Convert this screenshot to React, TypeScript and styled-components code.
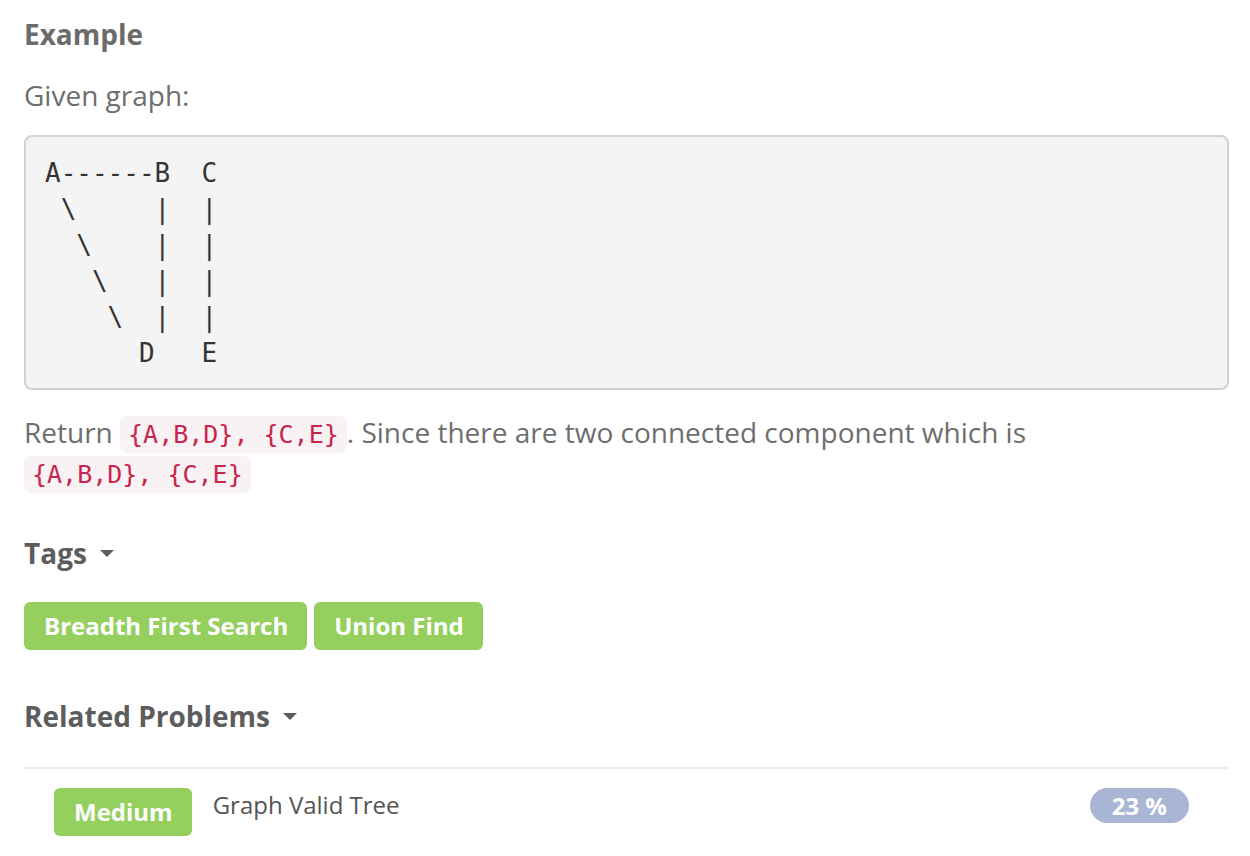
import React from 'react';
import styled, { createGlobalStyle } from 'styled-components';

const GlobalStyle = createGlobalStyle`
  body {
    margin: 0;
    background: #ffffff;
    font-family: 'Open Sans', 'Noto Sans', sans-serif;
    color: #6e6e6e;
  }
`;

const Page = styled.div`
  padding: 14px 21px 0 24px;
`;

const Heading = styled.h3<{ $top?: number; $bottom?: number }>`
  margin: ${p => p.$top ?? 0}px 0 ${p => p.$bottom ?? 0}px;
  font-size: 28px;
  line-height: 40px;
  font-weight: 700;
  color: #5d5d5d;
  display: flex;
  align-items: center;
`;

const Caret = styled.span`
  display: inline-block;
  margin-left: 13px;
  width: 0;
  height: 0;
  border-left: 7px solid transparent;
  border-right: 7px solid transparent;
  border-top: 7px solid #5d5d5d;
`;

const Paragraph = styled.p<{ $top?: number; $bottom?: number }>`
  margin: ${p => p.$top ?? 0}px 0 ${p => p.$bottom ?? 0}px;
  font-size: 28px;
  line-height: 40px;
  color: #6e6e6e;
`;

const Pre = styled.pre`
  margin: 0;
  padding: 18px 19px 17px;
  background: #f4f4f4;
  border: 2px solid #d2d2d2;
  border-radius: 8px;
  font-family: 'DejaVu Sans Mono', 'Liberation Mono', monospace;
  font-size: 26px;
  line-height: 36px;
  color: #333333;
`;

const Code = styled.code`
  font-family: 'DejaVu Sans Mono', 'Liberation Mono', monospace;
  font-size: 25px;
  line-height: 1;
  white-space: nowrap;
  padding: 4px 8px;
  border-radius: 8px;
  background: #f8f2f4;
  color: #c7254e;
`;

const TagList = styled.div`
  margin-top: 29px;
  display: flex;
  gap: 7px;
`;

const Badge = styled.span`
  display: inline-block;
  background: #95d05f;
  color: #ffffff;
  font-weight: 700;
  font-size: 24px;
  line-height: 48px;
  height: 48px;
  padding: 0 19px 0 20px;
  border-radius: 6px;
`;

const ProblemList = styled.div`
  margin-top: 31px;
  border-top: 2px solid #e9edf4;
`;

const ProblemRow = styled.div`
  display: flex;
  align-items: flex-start;
  padding: 19px 40px 20px 30px;
`;

const ProblemTitle = styled.span`
  flex: 1;
  margin-left: 21px;
  font-size: 24px;
  line-height: 34px;
  color: #555555;
`;

const RatePill = styled.span`
  background: #a8b5d5;
  color: #ffffff;
  font-weight: 700;
  font-size: 24px;
  height: 35px;
  line-height: 35px;
  padding: 0 22px;
  border-radius: 18px;
`;

const graph = `A------B  C
 \\     |  |
  \\    |  |
   \\   |  |
    \\  |  |
      D   E`;

const App: React.FC = () => {
  const tags = ['Breadth First Search', 'Union Find'];
  const related = [{ level: 'Medium', title: 'Graph Valid Tree', rate: '23 %' }];

  return (
    <>
      <GlobalStyle />
      <Page>
        <Heading $bottom={21} style={{ color: '#6b6b6b' }}>Example</Heading>
        <Paragraph $bottom={20}>Given graph:</Paragraph>
        <Pre>{graph}</Pre>
        <Paragraph $top={22}>
          Return <Code>{'{A,B,D}, {C,E}'}</Code>. Since there are two connected component which is{' '}
          <Code>{'{A,B,D}, {C,E}'}</Code>
        </Paragraph>

        <Heading $top={41}>
          Tags<Caret />
        </Heading>
        <TagList>
          {tags.map(tag => (
            <Badge key={tag}>{tag}</Badge>
          ))}
        </TagList>

        <Heading $top={46}>
          Related Problems<Caret />
        </Heading>
        <ProblemList>
          {related.map(item => (
            <ProblemRow key={item.title}>
              <Badge>{item.level}</Badge>
              <ProblemTitle>{item.title}</ProblemTitle>
              <RatePill>{item.rate}</RatePill>
            </ProblemRow>
          ))}
        </ProblemList>
      </Page>
    </>
  );
};

export default App;
